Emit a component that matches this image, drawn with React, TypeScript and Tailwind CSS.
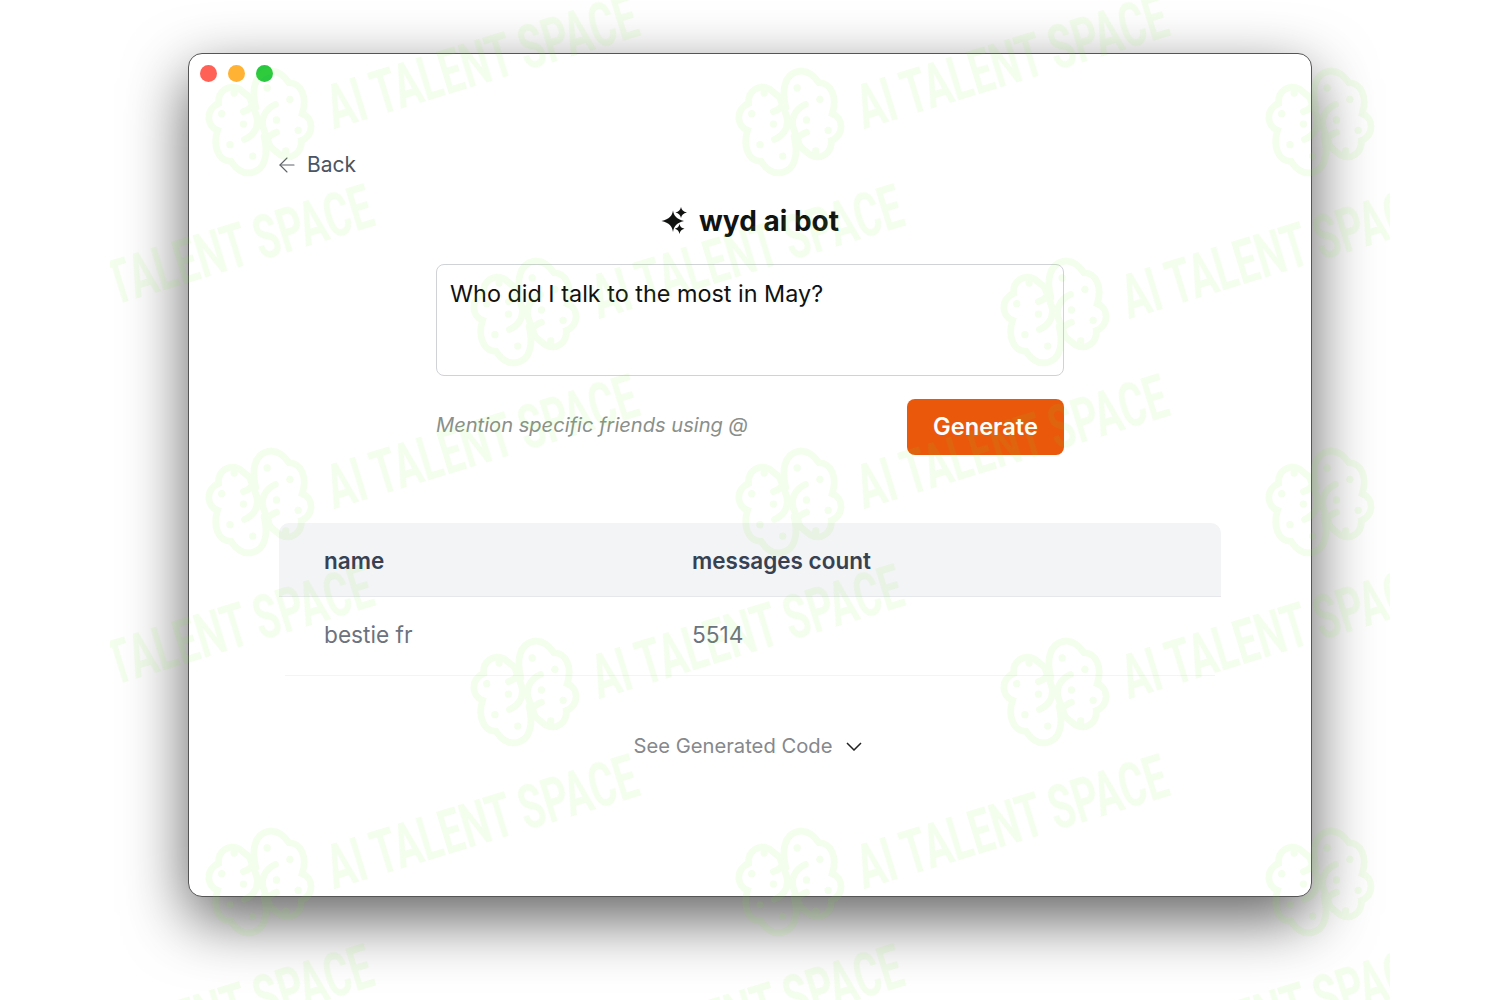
import React from 'react';
import { ArrowLeft } from 'lucide-react';

const logoRows = [-68, 122, 312, 502, 692, 882, 1072];

function FlowerMark({ x, y }: { x: number; y: number }) {
  const half = (
    <>
      <path d="M54 46C50 30 52 14 66 11C76 9 82 16 86 22C98 22 104 36 99 52C110 56 111 72 98 78C99 90 88 97 78 92L68 84C62 78 66 73 74 70" />
      <path d="M73 43C62 48 58 58 62 68L68 84" />
      <circle cx="65" cy="27" r="3.5" fill="currentColor" stroke="none" />
      <circle cx="87" cy="38" r="3.5" fill="currentColor" stroke="none" />
      <circle cx="74" cy="58" r="3.5" fill="currentColor" stroke="none" />
      <circle cx="95" cy="68" r="3.5" fill="currentColor" stroke="none" />
      <circle cx="83" cy="88" r="3.5" fill="currentColor" stroke="none" />
    </>
  );
  return (
    <svg
      viewBox="0 0 120 120"
      className="absolute w-[124px] h-[124px]"
      style={{ left: x - 60 - 110, top: y - 62 }}
      fill="none"
      stroke="currentColor"
      strokeWidth="6.5"
      strokeLinecap="round"
    >
      <g>{half}</g>
      <g transform="rotate(180 58 60)">{half}</g>
    </svg>
  );
}

// repeating logo + slanted wordmark, same tile as the source image
function Watermark() {
  return (
    <div className="absolute top-0 left-[110px] w-[1280px] h-[1000px] overflow-hidden pointer-events-none text-[#73eb2d] opacity-[0.085]">
      {logoRows.map((y, row) => {
        const xs = row % 2 === 1 ? [260, 790, 1320] : [-5, 525, 1055];
        return xs.map((x) => (
          <React.Fragment key={`${x}-${y}`}>
            <FlowerMark x={x} y={y} />
            <span
              className="absolute w-[600px] text-center whitespace-nowrap font-['Roboto',sans-serif] font-bold text-[62px] leading-none rotate-[-17deg] scale-x-[0.64]"
              style={{ left: x + 222 - 300 - 110, top: y - 60 - 31 }}
            >
              AI TALENT SPACE
            </span>
          </React.Fragment>
        ));
      })}
    </div>
  );
}

function Sparkles() {
  return (
    <svg viewBox="0 0 26 28" className="w-[26px] h-[28px] text-[#111311]" fill="currentColor">
      <path d="M12 3C13 8.5 15.5 11.5 23 13.5C15.5 15.5 13 18.5 12 24.5C11 18.5 8.5 15.5 0.5 13.5C8.5 11.5 11 8.5 12 3Z" transform="translate(0 0.5)" />
      <path d="M20 0C20.6 3 22.2 4.6 26 5.5C22.2 6.4 20.6 8 20 11C19.4 8 17.8 6.4 14.5 5.5C17.8 4.6 19.4 3 20 0Z" />
      <path d="M18.5 17C19.1 19.8 20.4 21 23.5 21.8C20.4 22.6 19.1 23.8 18.5 27C17.9 23.8 16.6 22.6 13.8 21.8C16.6 21 17.9 19.8 18.5 17Z" />
    </svg>
  );
}

export default function App() {
  return (
    <div className="relative h-[1000px] overflow-hidden bg-white pt-[53px] font-['Inter',sans-serif]">
      <div className="mx-auto flex h-[844px] w-[1124px] flex-col rounded-[14px] border border-[#555] bg-white px-[90px] shadow-[0_22px_62px_rgba(0,0,0,0.62)]">
        <div className="-ml-[79px] mt-[11px] flex gap-[11px]">
          <span className="h-[17px] w-[17px] rounded-full bg-[#ff6157]" />
          <span className="h-[17px] w-[17px] rounded-full bg-[#ffb233]" />
          <span className="h-[17px] w-[17px] rounded-full bg-[#2ac840]" />
        </div>

        <div className="mt-[69px] flex items-center gap-[8px] text-[21px] leading-[28px] text-[#4b5563]">
          <ArrowLeft size={24} strokeWidth={1.1} className="-ml-[4px] text-[#5f6368]" />
          <span>Back</span>
        </div>

        <div className="mt-[24px] flex items-center justify-center gap-[12px]">
          <Sparkles />
          <h1 className="text-[28px] font-bold leading-[36px] text-[#111311]">wyd ai bot</h1>
        </div>

        <div className="mx-auto mt-[25px] w-[628px]">
          <textarea
            readOnly
            defaultValue="Who did I talk to the most in May?"
            className="block h-[112px] w-full resize-none rounded-[8px] border border-[#cfd2d6] bg-transparent px-[13px] py-[13px] text-[23.4px] leading-[32px] text-[#111] outline-none"
          />
          <div className="mt-[23px] flex items-center justify-between">
            <span className="pb-[3px] text-[20.1px] italic text-[#8a8f8a]">Mention specific friends using @</span>
            <button className="h-[56px] w-[157px] rounded-[8px] bg-[#ea580c] text-[23.6px] font-semibold text-white">
              Generate
            </button>
          </div>
        </div>

        <div className="mt-[68px]">
          <div className="grid h-[74px] grid-cols-[368px_1fr] items-center rounded-t-[10px] border-b border-[#e5e7eb] bg-[#f3f4f6] px-[45px] pt-[2px] text-[22.5px] font-semibold text-[#374151]">
            <span>name</span>
            <span>messages count</span>
          </div>
          <div className="mx-[6px] grid h-[79px] grid-cols-[368px_1fr] items-center border-b border-[#f3f4f6] px-[39px] pb-[2px] text-[22.7px] text-[#6b7280]">
            <span>bestie fr</span>
            <span>5514</span>
          </div>
        </div>

        <button className="mt-[55px] flex items-center justify-center gap-[14px] pr-[4px] text-[20.2px] text-[#85888c]">
          <span>See Generated Code</span>
          <svg viewBox="0 0 16 9" className="h-[9px] w-[16px]" fill="none" stroke="#222" strokeWidth="1.5">
            <path d="M1 1L8 8L15 1" />
          </svg>
        </button>
      </div>
      <Watermark />
    </div>
  );
}
